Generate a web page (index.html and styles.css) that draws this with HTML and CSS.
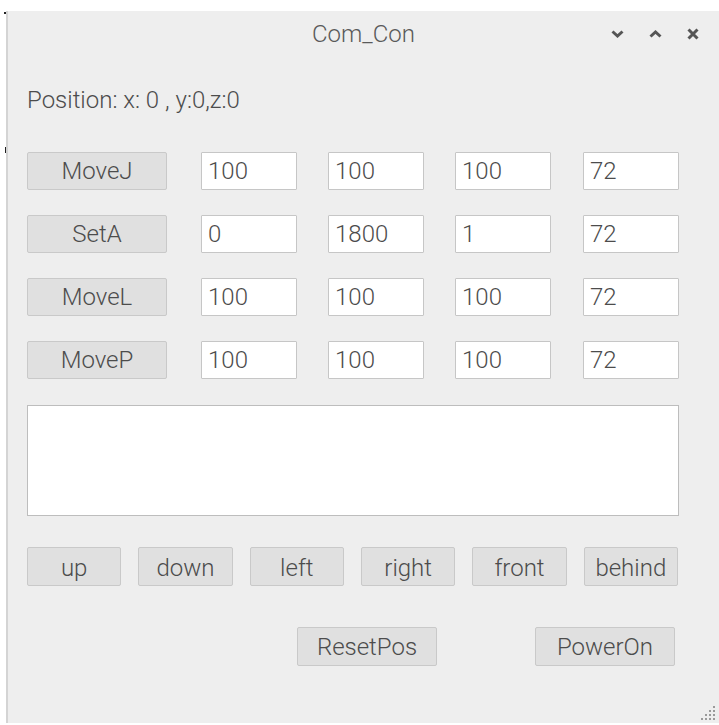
FILE: index.html
```html
<!DOCTYPE html>
<html lang="en">
<head>
<meta charset="utf-8">
<title>Com_Con</title>
<link rel="stylesheet" href="styles.css">
</head>
<body>
<div class="mark mark-a"></div>
<div class="mark mark-b"></div>
<div class="window">
  <div class="titlebar">
    <div class="tb-side"></div>
    <div class="tb-title">Com_Con</div>
    <div class="tb-side tb-controls">
      <svg class="ctl" width="13" height="8" viewBox="0 0 13 8"><path d="M1.5 1.5 L6.5 6 L11.5 1.5" fill="none" stroke="#555" stroke-width="3"/></svg>
      <svg class="ctl" width="13" height="8" viewBox="0 0 13 8"><path d="M1.5 6.5 L6.5 2 L11.5 6.5" fill="none" stroke="#555" stroke-width="3"/></svg>
      <svg class="ctl" width="12" height="12" viewBox="0 0 12 12"><path d="M1.5 1.5 L10.5 10.5 M10.5 1.5 L1.5 10.5" fill="none" stroke="#555" stroke-width="3"/></svg>
    </div>
  </div>
  <div class="content">
    <div class="position">Position: x: 0 , y:0,z:0</div>
    <div class="grid">
      <button class="btn">MoveJ</button>
      <input class="field" type="text" value="100">
      <input class="field" type="text" value="100">
      <input class="field" type="text" value="100">
      <input class="field" type="text" value="72">

      <button class="btn">SetA</button>
      <input class="field" type="text" value="0">
      <input class="field" type="text" value="1800">
      <input class="field" type="text" value="1">
      <input class="field" type="text" value="72">

      <button class="btn">MoveL</button>
      <input class="field" type="text" value="100">
      <input class="field" type="text" value="100">
      <input class="field" type="text" value="100">
      <input class="field" type="text" value="72">

      <button class="btn">MoveP</button>
      <input class="field" type="text" value="100">
      <input class="field" type="text" value="100">
      <input class="field" type="text" value="100">
      <input class="field" type="text" value="72">
    </div>
    <textarea class="log"></textarea>
    <div class="dirs">
      <button class="btn dir">up</button>
      <button class="btn dir">down</button>
      <button class="btn dir">left</button>
      <button class="btn dir">right</button>
      <button class="btn dir">front</button>
      <button class="btn dir">behind</button>
    </div>
    <div class="actions">
      <button class="btn act">ResetPos</button>
      <button class="btn act">PowerOn</button>
    </div>
  </div>
  <svg class="grip" width="18" height="18" viewBox="0 0 18 18">
    <g fill="#9a9a9a">
      <rect x="14" y="2" width="2" height="2"/>
      <rect x="10" y="6" width="2" height="2"/><rect x="14" y="6" width="2" height="2"/>
      <rect x="6" y="10" width="2" height="2"/><rect x="10" y="10" width="2" height="2"/><rect x="14" y="10" width="2" height="2"/>
      <rect x="2" y="14" width="2" height="2"/><rect x="6" y="14" width="2" height="2"/><rect x="10" y="14" width="2" height="2"/><rect x="14" y="14" width="2" height="2"/>
    </g>
  </svg>
</div>
</body>
</html>
```

FILE: styles.css
```css
html, body {
  margin: 0;
  padding: 0;
  background: #ffffff;
}
body {
  font-family: "Roboto Light", Roboto, "Liberation Sans", sans-serif;
  font-weight: 300;
  color: #4c4c4c;
  width: 719px;
  height: 725px;
  overflow: hidden;
  position: relative;
}
.mark {
  position: absolute;
  background: #222;
}
.mark-a { left: 4px; top: 12px; width: 3px; height: 2px; }
.mark-b { left: 5px; top: 147px; width: 2px; height: 6px; }

.window {
  position: relative;
  margin: 11px 0 0 6px;
  height: 712px;
  background: #eeeeee;
  border-left: 2px solid #d4d4d4;
  box-sizing: border-box;
}
.titlebar {
  height: 46px;
  display: grid;
  grid-template-columns: 1fr auto 1fr;
  align-items: center;
}
.tb-title {
  font-size: 24px;
  color: #5a5a5a;
  line-height: 28px;
}
.tb-controls {
  display: flex;
  justify-content: flex-end;
  align-items: center;
  gap: 25px;
  padding-right: 20px;
}
.ctl { display: block; }

.content {
  padding: 29px 40px 0 19px;
}
.position {
  font-size: 24px;
  line-height: 28px;
  color: #4c4c4c;
  margin-bottom: 38px;
}
.grid {
  display: grid;
  grid-template-columns: 140px 96px 96px 96px 96px;
  grid-auto-rows: 38px;
  column-gap: 32px;
  row-gap: 25px;
}
.grid .field:nth-child(5n+2) {
  margin-left: 2px;
}
.grid .field:nth-child(5n+3) {
  margin-left: 1px;
}
.btn {
  font-family: "Roboto Light", Roboto, "Liberation Sans", sans-serif;
  font-weight: 300;
  font-size: 24px;
  color: #4c4c4c;
  background: #e0e0e0;
  border: 1px solid #c9c9c9;
  border-radius: 2px;
  padding: 0;
  margin: 0;
  height: 38px;
  line-height: 36px;
}
.field {
  font-family: "Roboto Light", Roboto, "Liberation Sans", sans-serif;
  font-weight: 300;
  font-size: 24px;
  color: #4c4c4c;
  background: #ffffff;
  border: 1px solid #c6c6c6;
  border-radius: 1px;
  padding: 0 0 0 6px;
  margin: 0;
  height: 38px;
  box-sizing: border-box;
  width: 96px;
  outline: none;
}
.log {
  display: block;
  box-sizing: border-box;
  width: 652px;
  height: 111px;
  margin: 26px 0 0 0;
  background: #ffffff;
  border: 1px solid #bdbdbd;
  resize: none;
  font-family: Roboto, "Liberation Sans", sans-serif;
  outline: none;
}
.dirs {
  margin-top: 31px;
  width: 651px;
  display: grid;
  grid-template-columns: repeat(6, 1fr);
  column-gap: 17px;
}
.dir {
  height: 39px;
  line-height: 40px;
}
.actions {
  margin-top: 41px;
  display: flex;
  gap: 98px;
  padding-left: 270px;
}
.act {
  width: 140px;
  height: 39px;
}
.grip {
  position: absolute;
  right: 2px;
  bottom: 1px;
}
```
